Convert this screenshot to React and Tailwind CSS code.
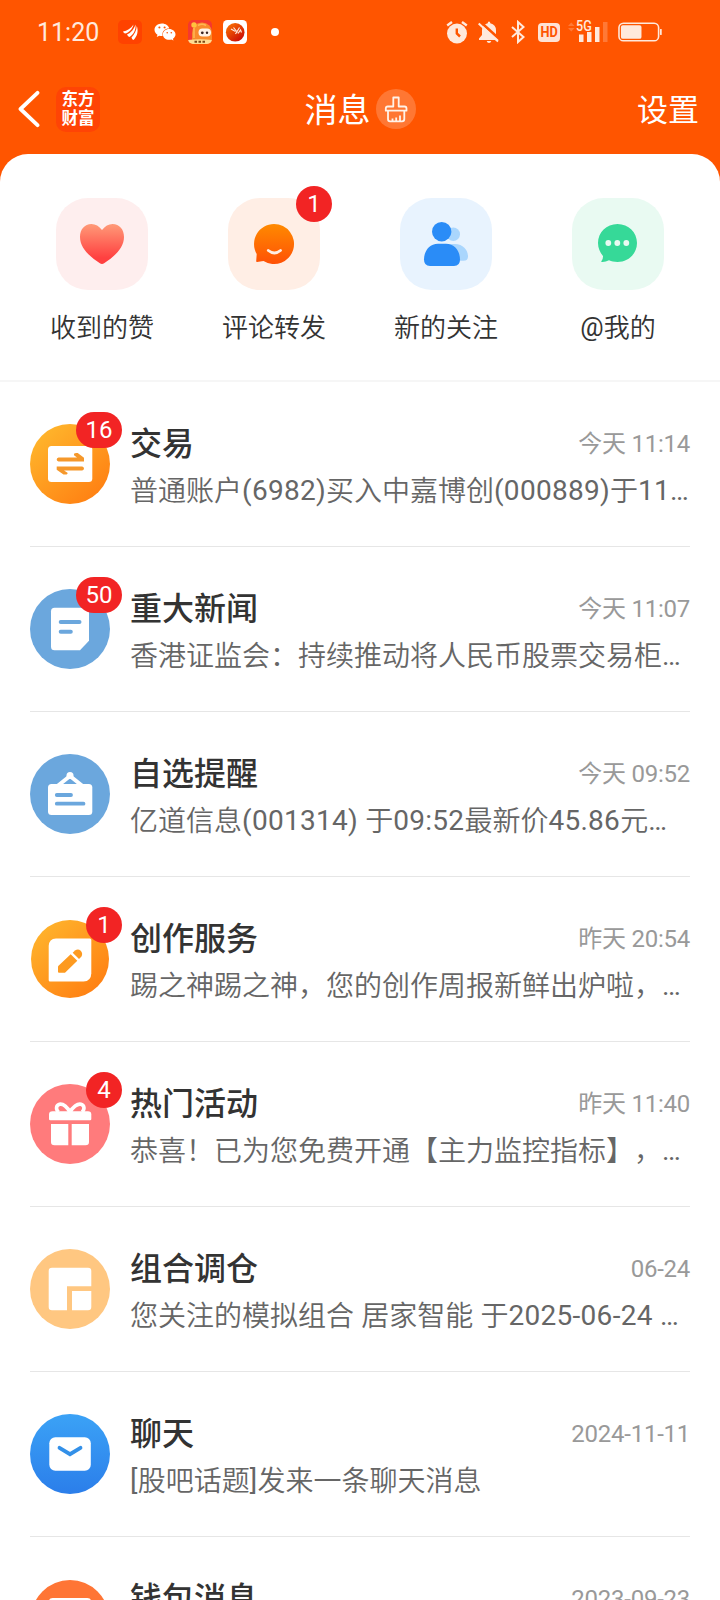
import React from 'react'
import { FaWeixin } from 'react-icons/fa'

const shortcuts = [
  { label: '收到的赞', bg: 'bg-[#feeeee]', icon: <HeartIcon /> },
  { label: '评论转发', bg: 'bg-[#ffeee5]', icon: <CommentIcon />, badge: 1 },
  { label: '新的关注', bg: 'bg-[#e8f3fe]', icon: <FollowersIcon /> },
  { label: '@我的', bg: 'bg-[#e9faf2]', icon: <MentionIcon /> },
]

const messages = [
  { title: '交易', time: '今天 11:14', text: '普通账户(6982)买入中嘉博创(000889)于11…', badge: 16, icon: <TradeIcon /> },
  { title: '重大新闻', time: '今天 11:07', text: '香港证监会：持续推动将人民币股票交易柜…', badge: 50, icon: <NewsIcon /> },
  { title: '自选提醒', time: '今天 09:52', text: '亿道信息(001314) 于09:52最新价45.86元…', icon: <AlertIcon /> },
  { title: '创作服务', time: '昨天 20:54', text: '踢之神踢之神，您的创作周报新鲜出炉啦，…', badge: 1, icon: <CreateIcon /> },
  { title: '热门活动', time: '昨天 11:40', text: '恭喜！已为您免费开通【主力监控指标】，…', badge: 4, icon: <GiftIcon /> },
  { title: '组合调仓', time: '06-24', text: '您关注的模拟组合 居家智能 于2025-06-24 …', icon: <PortfolioIcon /> },
  { title: '聊天', time: '2024-11-11', text: '[股吧话题]发来一条聊天消息', icon: <ChatIcon /> },
  { title: '钱包消息', time: '2023-09-23', icon: <WalletIcon /> },
]

function HeartIcon() {
  return (
    <svg viewBox="0 0 92 92" className="size-full">
      <defs>
        <linearGradient id="heart" x1="0" y1="0" x2="0" y2="1">
          <stop offset="0" stopColor="#ff9a78" />
          <stop offset="0.85" stopColor="#ff4040" />
        </linearGradient>
      </defs>
      <path fill="url(#heart)" d="M46 32C43 28 39.500 26 35.500 26C28.500 26 24 31.500 24 39C24 50.500 35 59.500 43.500 65C45.500 66.300 46.500 66.300 48.500 65C57 59.500 68 50.500 68 39C68 31.500 63.500 26 56.500 26C52.500 26 49 28 46 32Z" />
    </svg>
  )
}

function CommentIcon() {
  return (
    <svg viewBox="0 0 92 92" className="size-full">
      <defs>
        <linearGradient id="comment" x1="0" y1="0" x2="0" y2="1">
          <stop offset="0" stopColor="#ff8a00" />
          <stop offset="1" stopColor="#ff5106" />
        </linearGradient>
      </defs>
      <path fill="url(#comment)" d="M46 26A20 20 0 1 1 35.500 63L29 64Q28 64 28.200 63L28.700 56A20 20 0 0 1 46 26Z" />
      <path d="M40.300 52.500Q46.500 57.500 52.500 52.500" fill="none" stroke="#ffeee5" strokeWidth="2.800" strokeLinecap="round" />
    </svg>
  )
}

function FollowersIcon() {
  return (
    <svg viewBox="0 0 92 92" className="size-full">
      <circle cx="53.300" cy="36.300" r="6.700" fill="#aad6fd" />
      <path fill="#aad6fd" d="M48 46H55C63 46 68 52 68 58.500Q68 62.700 63.500 62.700H50Z" />
      <circle cx="41.700" cy="33.700" r="9.700" fill="#2a8cf7" />
      <path fill="#2a8cf7" d="M38 45.700H46C54.500 45.700 60 53 60 61.500Q60 68 54 68H30Q24 68 24 61.500C24 53 29.500 45.700 38 45.700Z" />
    </svg>
  )
}

function MentionIcon() {
  return (
    <svg viewBox="0 0 92 92" className="size-full">
      <path fill="#36d998" d="M45.500 26C56.500 26 65 34.500 65 45C65 55.500 56.500 64 45.500 64C42 64 39.500 63.300 37 62.300Q33.500 64.200 29.800 64Q28.700 63.800 29.500 63Q31.200 61 31 58C28 54.500 26 50 26 45C26 34.500 34.500 26 45.500 26Z" />
      <circle cx="36.300" cy="45" r="2.900" fill="#e9faf2" />
      <circle cx="45.300" cy="45" r="2.900" fill="#e9faf2" />
      <circle cx="54.300" cy="45" r="2.900" fill="#e9faf2" />
    </svg>
  )
}

function TradeIcon() {
  return (
    <svg viewBox="0 0 80 80" className="size-full">
      <defs>
        <linearGradient id="trade" x1="0.100" y1="0.100" x2="0.850" y2="0.950">
          <stop offset="0" stopColor="#ffb62c" />
          <stop offset="1" stopColor="#ff7f12" />
        </linearGradient>
      </defs>
      <circle cx="40" cy="40" r="40" fill="url(#trade)" />
      <rect x="18" y="22" width="44.300" height="36" rx="3.500" fill="#fff" />
      <path fill="#f5982b" d="M28.500 33.600H47L44 31.300Q43.500 29 46.300 29H47.700L54 33.800V37.400H28.500Q26.700 37 26.700 35.500Q26.700 34 28.500 33.600Z" />
      <path fill="#f5982b" d="M52.200 46.400H34L37.500 48.800Q38 50.600 35.500 50.600H33.500L26.700 45.700V42.600H52.200Q54 43 54 44.500Q54 46 52.200 46.400Z" />
    </svg>
  )
}

function NewsIcon() {
  return (
    <svg viewBox="0 0 80 80" className="size-full">
      <circle cx="40" cy="40" r="40" fill="#6ba7dd" />
      <path fill="#fff" d="M24.500 18.700H55.500Q59 18.700 59 22.200V51.700L50 61.300H24.500Q21 61.300 21 57.800V22.200Q21 18.700 24.500 18.700Z" />
      <path d="M30.700 33H49.500M30.700 42.700H40.800" stroke="#6ba7dd" strokeWidth="4" strokeLinecap="round" />
    </svg>
  )
}

function AlertIcon() {
  return (
    <svg viewBox="0 0 80 80" className="size-full">
      <circle cx="40" cy="40" r="40" fill="#6ba7dd" />
      <path d="M27.500 32L40 22L52.500 32" fill="none" stroke="#fff" strokeWidth="4" />
      <circle cx="40" cy="21.500" r="3.500" fill="#fff" />
      <rect x="18" y="30" width="44.300" height="31" rx="3.500" fill="#fff" />
      <path d="M26.800 41H41M26.800 49.700H53.500" stroke="#6ba7dd" strokeWidth="3.800" strokeLinecap="round" />
    </svg>
  )
}

function CreateIcon() {
  return (
    <svg viewBox="0 0 80 80" className="size-full">
      <defs>
        <linearGradient id="create" x1="0.100" y1="0.100" x2="0.850" y2="0.950">
          <stop offset="0" stopColor="#ffb32c" />
          <stop offset="1" stopColor="#ff7f12" />
        </linearGradient>
      </defs>
      <circle cx="40" cy="40" r="39" fill="url(#create)" />
      <path fill="#fff" d="M26 19.500H60Q61.300 19.500 61.300 21V54.500Q61 62.300 53.500 62.500H20Q18.700 62.500 18.700 61V27Q19 19.700 26 19.500Z" />
      <path fill="#fd9a20" d="M40.700 35.300L47.300 41.700L35.500 53.200Q35 53.700 34.300 53.700H29Q28 53.700 28 52.700V48Q28 47.300 28.500 46.800Z" />
      <path fill="#fd9a20" d="M42.700 33.700L45 31.600Q48 29.200 50.700 31.700Q53.300 34.500 51.300 37.800L49 40Z" />
    </svg>
  )
}

function GiftIcon() {
  return (
    <svg viewBox="0 0 80 80" className="size-full">
      <circle cx="40" cy="40" r="40" fill="#ff7b7c" />
      <path d="M40 28.500C37.500 23 33 19.500 29.500 20.300C26 21.300 25.500 25.500 28.500 28M40 28.500C42.500 23 47.500 19.500 51 20.300C54.500 21.300 55 25.500 52 28" fill="none" stroke="#fff" strokeWidth="3.600" />
      <path fill="#fff" d="M22.500 27.300H58Q61.300 27.300 61.300 30.500V35Q61.300 36.300 60 36.300H20.300Q19 36.300 19 35V30.500Q19 27.300 22.500 27.300Z" />
      <path fill="#fff" d="M21 40H38.300V61.300H24.500Q21 61.300 21 58ZM41.700 40H59V58Q59 61.300 55.500 61.300H41.700Z" />
    </svg>
  )
}

function PortfolioIcon() {
  return (
    <svg viewBox="0 0 80 80" className="size-full">
      <circle cx="40" cy="40" r="40" fill="#ffc781" />
      <path fill="#fff" d="M22 18.700H58Q61.300 18.700 61.300 22V37.300H37V61.300H22Q18.700 61.300 18.700 58V22Q18.700 18.700 22 18.700Z" />
      <path fill="#fff" d="M42 42H61.300V58Q61.300 61.300 58 61.300H42Z" />
    </svg>
  )
}

function ChatIcon() {
  return (
    <svg viewBox="0 0 80 80" className="size-full">
      <defs>
        <linearGradient id="chat" x1="0" y1="0" x2="0" y2="1">
          <stop offset="0" stopColor="#3ba2f6" />
          <stop offset="1" stopColor="#2b7eea" />
        </linearGradient>
      </defs>
      <circle cx="40" cy="40" r="40" fill="url(#chat)" />
      <rect x="19.300" y="23.300" width="41.500" height="33.400" rx="6" fill="#fff" />
      <path d="M29.500 33.800L40 40.200L50.500 33.800" fill="none" stroke="#3390e8" strokeWidth="3.800" strokeLinecap="round" />
    </svg>
  )
}

function WalletIcon() {
  return (
    <svg viewBox="0 0 80 80" className="size-full">
      <circle cx="40" cy="40" r="39" fill="#ff7535" />
      <rect x="18.700" y="19" width="42.600" height="42" rx="4" fill="#fff" />
    </svg>
  )
}

function Badge({ count }) {
  return (
    <span className="absolute -right-3 -top-3 flex h-9 min-w-9 items-center justify-center rounded-full bg-[#f22424] px-[9.500px] text-2xl leading-none text-white">
      {count}
    </span>
  )
}

// Chinese runs are set a little lighter than the digits and latin characters
function MixedText({ children }) {
  return children.split(/([\x20-\x7e…]+)/).filter(Boolean).map((part, i) => (
    <span key={i} className={/^[\x20-\x7e…]/.test(part) ? 'relative -top-px font-normal tracking-[0.28px]' : 'font-[350]'}>
      {part}
    </span>
  ))
}

function StatusBar() {
  return (
    <div className="flex h-16 items-center justify-between pl-[37px] pr-[57px] text-[#ffe9dc]">
      <div className="flex items-center">
        <span className="w-[81px] text-[25px] leading-none">11:20</span>
        <svg viewBox="0 0 24 24" className="size-6">
          <rect width="24" height="24" rx="5" fill="#ff4200" />
          <path fill="#fff" d="M5 11.500C9 11 13 8.500 15.500 4.500C14.500 9 11 13 7 13.500Q5.500 13 5 11.500ZM9 14.500C13 13 16 9 17.500 4.500C18 10 15.500 14.500 11.500 17Q10 16.500 9 14.500ZM13.500 17.500C16.500 14.500 18.500 10.500 18.800 6C20.500 11 19.500 16 15.500 20Q14 19.500 13.500 17.500Z" />
        </svg>
        <FaWeixin className="ml-3 size-[22px] text-white" />
        <svg viewBox="0 0 24 24" className="ml-3 size-6">
          <defs>
            <clipPath id="mascot"><rect width="24" height="24" rx="5" /></clipPath>
          </defs>
          <g clipPath="url(#mascot)">
            <rect width="24" height="24" fill="#f5382f" />
            <path d="M4 24V13Q5 3 14 2.500Q23 3 24 12V24Z" fill="#f98b2c" />
            <circle cx="6" cy="5" r="2.700" fill="#ffc23d" />
            <path d="M6 8V18M10 5.500Q14 3 18 5.500" stroke="#ffb653" strokeWidth="1.600" fill="none" />
            <rect x="10.500" y="8.500" width="12.500" height="8" rx="4" fill="#fff2e5" />
            <circle cx="14.300" cy="12.800" r="1.400" fill="#3b2420" />
            <circle cx="19" cy="12.800" r="1.200" fill="#3b2420" />
            <path d="M0 20Q12 18.500 24 20V24H0Z" fill="#ffdc91" />
            <path d="M6.500 21.700H9M10.500 21.700H13M14.500 21.700H17" stroke="#7c4a18" strokeWidth="2" />
          </g>
        </svg>
        <svg viewBox="0 0 24 24" className="ml-[11px] size-6">
          <defs>
            <linearGradient id="ball" x1="0" y1="0" x2="0.800" y2="1">
              <stop offset="0" stopColor="#ff7a00" />
              <stop offset="1" stopColor="#c90808" />
            </linearGradient>
          </defs>
          <rect width="24" height="24" rx="4.500" fill="#fff" />
          <circle cx="12.200" cy="12.300" r="9.300" fill="url(#ball)" />
          <path d="M8 9L12.500 11.500M10.500 7.500L14.500 12.500M12.500 14L16.500 7.500M15 13.500L17.500 10L18.500 12.500" fill="none" stroke="#ffe9dc" strokeWidth="1.200" />
        </svg>
        <span className="ml-6 size-2 rounded-full bg-white" />
      </div>

      <div className="flex items-center">
        <svg viewBox="0 0 22 24" className="h-6 w-[22px]" fill="none" stroke="currentColor">
          <circle cx="11" cy="13.500" r="10" fill="currentColor" stroke="none" />
          <path d="M1.200 5.500L6 2M16 2L20.800 5.500" strokeWidth="2.400" />
          <path d="M10.800 8.500V13.500L14 16.500" stroke="#ff5500" strokeWidth="2.400" />
        </svg>
        <svg viewBox="0 0 22 24" className="ml-[10px] h-6 w-[22px]">
          <path fill="currentColor" d="M11 1.500Q12.300 1.500 12.300 3.300Q18 4.500 18 10.500V15L21 18.500V20H1V18.500L4 15V10.500Q4 4.500 9.700 3.300Q9.700 1.500 11 1.500ZM8.700 21H13.300Q12.800 23 11 23Q9.200 23 8.700 21Z" />
          <path d="M2 1.500L22 19.500" stroke="#ff5500" strokeWidth="2.600" />
          <path d="M0.700 3.500L20 21.500" stroke="currentColor" strokeWidth="2" />
        </svg>
        <svg viewBox="0 0 14 24" className="ml-[11px] mr-px h-6 w-[14px]" fill="none" stroke="currentColor" strokeWidth="2">
          <path d="M1 7L12.500 17L7 22V2L12.500 7L1 17" />
        </svg>
        <span className="ml-3 flex h-[19px] w-[22px] items-center justify-center rounded-[4px] bg-[#ffe3d4] text-[15px] font-bold leading-none text-[#ff5500]">
          <span className="scale-x-[0.85]">HD</span>
        </span>
        <div className="relative ml-2 h-6 w-10">
          <svg viewBox="0 0 40 24" className="size-full" fill="currentColor">
            <path opacity="0.250" d="M0 6L3.300 2.500L6.600 6ZM0 8H6.600L3.300 11.500Z" />
            <rect x="11" y="14.500" width="4.500" height="7.500" />
            <rect x="19" y="12" width="4.500" height="10" />
            <rect x="27" y="7" width="4.500" height="15" />
            <rect opacity="0.250" x="35" y="2" width="4.500" height="20" />
          </svg>
          <span className="absolute left-[8px] top-[-1px] origin-left scale-x-90 text-[14px] font-medium leading-none">5G</span>
        </div>
        <svg viewBox="0 0 46 20" className="ml-[10px] h-5 w-[45px]" fill="none" stroke="currentColor">
          <rect x="1" y="1" width="40.500" height="18" rx="4.500" strokeWidth="1.600" />
          <rect x="3" y="3" width="21" height="14" rx="2" fill="currentColor" stroke="none" />
          <path d="M43.800 7V13" strokeWidth="1.800" />
        </svg>
      </div>
    </div>
  )
}

function Header() {
  return (
    <header className="flex h-[90px] items-center justify-between pl-[18px] pr-[21px] text-white">
      <div className="flex w-[183px] items-center">
        <svg viewBox="0 0 22 38" className="h-[38px] w-[22px]" fill="none" stroke="currentColor" strokeWidth="3.800">
          <path d="M19.500 2.800L2.500 19L19.500 35.200" strokeLinecap="round" strokeLinejoin="round" />
        </svg>
        <div className="ml-4 flex h-[45px] w-11 flex-col items-center justify-center rounded-[10px] bg-[#ff4405] text-[16.500px] font-bold leading-[19.500px]">
          <span>东方</span>
          <span>财富</span>
        </div>
      </div>
      <div className="flex items-center">
        <h1 className="pt-[3px] text-[33px] leading-none">消息</h1>
        <div className="ml-[5px] size-10 rounded-full bg-white/20">
          <svg viewBox="0 0 40 40" className="size-full" fill="none" stroke="#fff3ea" strokeWidth="1.800" strokeLinejoin="round">
            <path d="M17.300 17.500V8.500H22.700V17.500H28.500Q30.500 17.500 30.500 19.500V21.700H9.800V19.500Q9.800 17.500 11.800 17.500Z" />
            <path d="M12 22V30Q12 32.300 14 32.300H26Q28.300 32.300 28.300 30V22M16.500 32V29.500M20.200 32V28.500M24 32V26.500" />
          </svg>
        </div>
      </div>
      <button className="w-[180px] pt-[3px] text-right text-[31px] leading-none">设置</button>
    </header>
  )
}

export default function App() {
  return (
    <div lang="zh-CN" className="h-[1600px] w-[720px] overflow-hidden bg-[#ff5500] font-[Roboto,'Noto_Sans_CJK_SC',sans-serif]">
      <StatusBar />
      <Header />

      <main className="h-full rounded-t-[28px] bg-white">
        {/* Shortcuts */}
        <section className="flex h-[228px] border-b-2 border-[#f6f6f6] px-4 pt-11">
          {shortcuts.map((item) => (
            <div key={item.label} className="flex flex-1 flex-col items-center">
              <div className={`relative size-[92px] rounded-[32px] ${item.bg}`}>
                {item.icon}
                {item.badge && <Badge count={item.badge} />}
              </div>
              <span className="mt-5 text-[26px] leading-9 text-[#333]">
                <MixedText>{item.label}</MixedText>
              </span>
            </div>
          ))}
        </section>

        {/* Message list */}
        <ul className="px-[30px]">
          {messages.map((msg) => (
            <li key={msg.title} className="flex h-[165px] border-b border-[#e6e6e6] pt-[42px]">
              <div className="relative size-20 shrink-0">
                {msg.icon}
                {msg.badge && <Badge count={msg.badge} />}
              </div>
              <div className="ml-5 min-w-0 flex-1">
                <div className="flex h-10 items-center justify-between">
                  <h2 className="text-[32px] font-medium leading-10 text-[#333]">{msg.title}</h2>
                  <span className="text-2xl leading-10 tracking-[-0.25px] text-[#999]">{msg.time}</span>
                </div>
                {msg.text && (
                  <p className="mt-2 whitespace-pre text-[28px] leading-10 text-[#666] [text-spacing-trim:space-all]">
                    <MixedText>{msg.text}</MixedText>
                  </p>
                )}
              </div>
            </li>
          ))}
        </ul>
      </main>
    </div>
  )
}
